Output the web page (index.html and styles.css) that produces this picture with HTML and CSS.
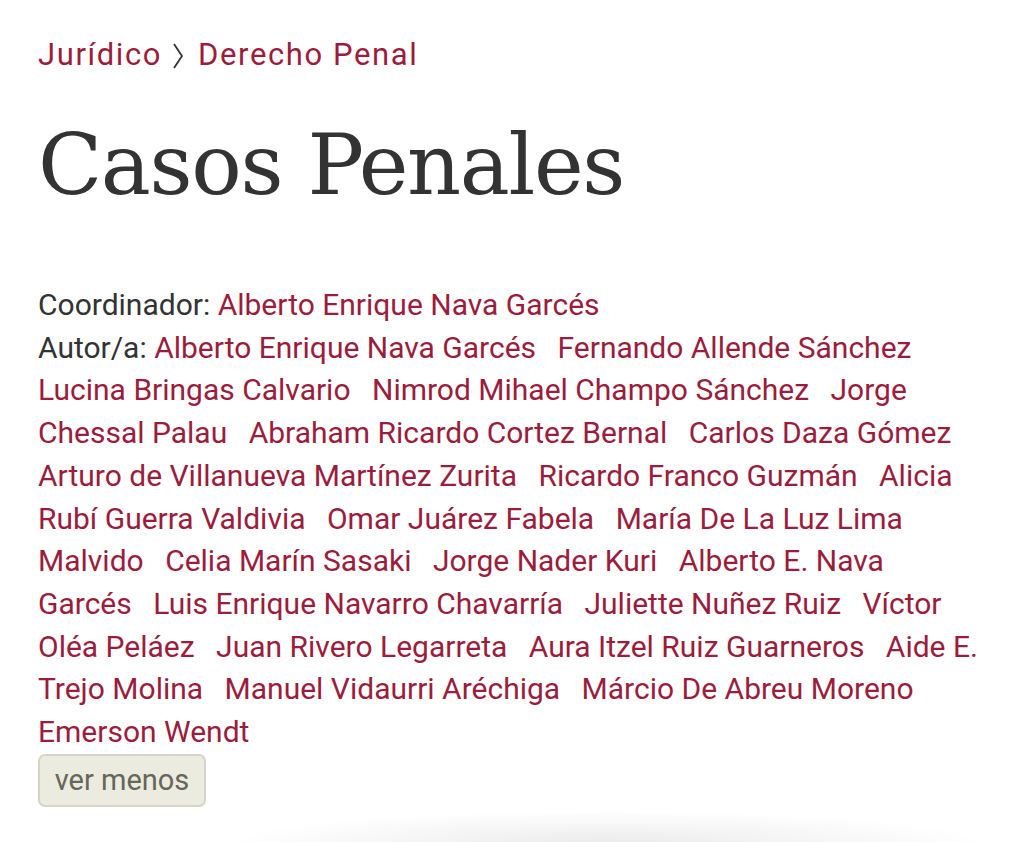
FILE: index.html
```html
<!DOCTYPE html>
<html lang="es">
<head>
  <meta charset="UTF-8" />
  <meta name="viewport" content="width=device-width, initial-scale=1.0" />
  <title>Casos Penales</title>
  <link rel="stylesheet" href="styles.css">
</head>
<body>
  <main class="ficha">
    <nav class="migas">
      <a href="#">Jurídico</a>
      <svg class="sep" width="12" height="26" viewBox="0 0 12 26" aria-hidden="true">
        <path d="M2 1 L10 13 L2 25" fill="none" stroke="#333333" stroke-width="1.8" stroke-linejoin="round" />
      </svg>
      <a href="#">Derecho Penal</a>
    </nav>

    <h1 class="titulo">Casos Penales</h1>

    <div class="creditos">
      <p class="linea">Coordinador: <a href="#">Alberto Enrique Nava Garcés</a></p>
      <p class="linea">Autor/a:
        <a href="#">Alberto Enrique Nava Garcés</a>
        <a href="#">Fernando Allende Sánchez</a>
        <a href="#">Lucina Bringas Calvario</a>
        <a href="#">Nimrod Mihael Champo Sánchez</a>
        <a href="#">Jorge Chessal Palau</a>
        <a href="#">Abraham Ricardo Cortez Bernal</a>
        <a href="#">Carlos Daza Gómez</a>
        <a href="#">Arturo de Villanueva Martínez Zurita</a>
        <a href="#">Ricardo Franco Guzmán</a>
        <a href="#">Alicia Rubí Guerra Valdivia</a>
        <a href="#">Omar Juárez Fabela</a>
        <a href="#">María De La Luz Lima Malvido</a>
        <a href="#">Celia Marín Sasaki</a>
        <a href="#">Jorge Nader Kuri</a>
        <a href="#">Alberto E. Nava Garcés</a>
        <a href="#">Luis Enrique Navarro Chavarría</a>
        <a href="#">Juliette Nuñez Ruiz</a>
        <a href="#">Víctor Oléa Peláez</a>
        <a href="#">Juan Rivero Legarreta</a>
        <a href="#">Aura Itzel Ruiz Guarneros</a>
        <a href="#">Aide E. Trejo Molina</a>
        <a href="#">Manuel Vidaurri Aréchiga</a>
        <a href="#">Márcio De Abreu Moreno</a>
        <a href="#">Emerson Wendt</a>
      </p>
      <button class="ver-menos" type="button">ver menos</button>
    </div>

    <!-- sombra de la tarjeta siguiente, que empieza bajo el borde -->
    <div class="sombra"></div>
  </main>
</body>
</html>
```

FILE: styles.css
```css
body {
  margin: 0;
  background-color: #ffffff;
  color: #333333;
  font-family: Roboto, 'Liberation Sans', sans-serif;
  overflow: hidden;
}
a {
  color: #9a1d3d;
  text-decoration: none;
}
.ficha {
  padding: 30px 38px 0 38px;
}
.migas {
  display: flex;
  align-items: center;
  gap: 10px;
  font-size: 31px;
  letter-spacing: 1.6px;
  line-height: 50px;
}
.migas .sep {
  margin: 2px 4px 0 0;
}
.titulo {
  font-family: 'DejaVu Serif', serif;
  font-weight: 400;
  font-size: 84px;
  letter-spacing: -1.4px;
  line-height: 100px;
  margin: 35px 0 0 0;
  color: #333333;
}
.creditos {
  margin-top: 69px;
  font-size: 30px;
  line-height: 42.7px;
}
.linea {
  margin: 0;
}
.linea a {
  margin-right: 14px;
}
.ver-menos {
  margin-top: 0;
  font-family: Roboto, 'Liberation Sans', sans-serif;
  font-size: 29px;
  color: #66665a;
  background-color: #ecebe0;
  border: 2px solid #d6d4c7;
  border-radius: 7px;
  padding: 0 10px;
  height: 53px;
  width: 168px;
}
.sombra {
  margin: 4px 0 0 190px;
  width: 760px;
  height: 32px;
  background: radial-gradient(ellipse 50% 100% at 50% 100%, rgba(0, 0, 0, 0.08), rgba(0, 0, 0, 0));
}
```
